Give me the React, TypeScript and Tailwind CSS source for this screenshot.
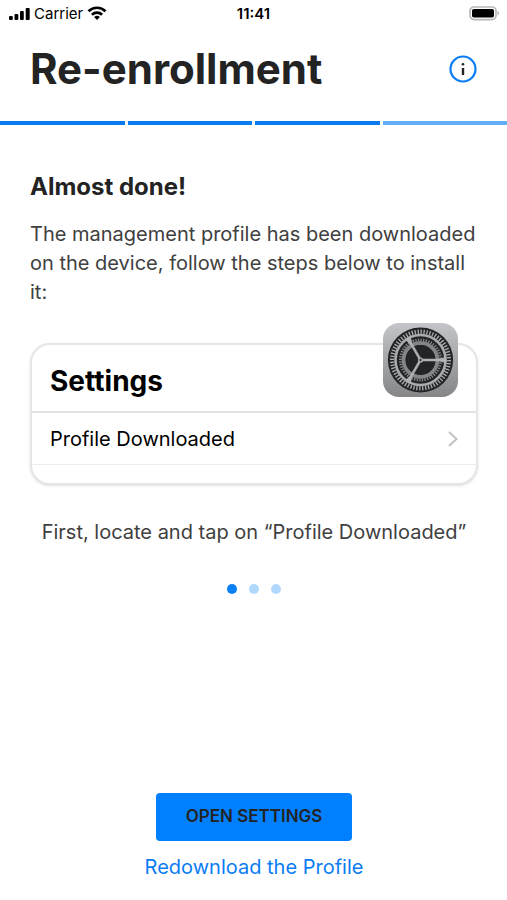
import clsx from 'clsx';

const steps = [
  { id: 'start', done: true },
  { id: 'remove', done: true },
  { id: 'download', done: true },
  { id: 'install', done: false }
];

const slides = ['Locate the profile', 'Install the profile', 'Finish'];

function StatusBar() {
  return (
    <div className="grid h-7 grid-cols-3 items-center px-2 text-[15px] text-black">
      <div className="flex items-center gap-1">
        <svg className="h-3 w-[22px]" viewBox="0 0 22 12" aria-hidden="true">
          <rect x="1" y="8" width="3.800" height="4" rx="1" />
          <rect x="6.500" y="6" width="3.800" height="6" rx="1" />
          <rect x="12" y="3" width="3.800" height="9" rx="1" />
          <rect x="17.700" y="0" width="4" height="12" rx="1" />
        </svg>
        <span>Carrier</span>
        <svg className="h-4 w-5" viewBox="0 0 20 16" fill="none" stroke="#000" strokeWidth="2.700" aria-hidden="true">
          <path d="M1.500 5.200a12.200 12.200 0 0 1 17 0" />
          <path d="M4.900 8.700a7.400 7.400 0 0 1 10.200 0" />
          <path d="M10 14 7.100 11.100a4.100 4.100 0 0 1 5.800 0z" fill="#000" stroke="none" />
        </svg>
      </div>
      <span className="text-center font-semibold">11:41</span>
      <svg className="h-4 w-[30px] justify-self-end" viewBox="0 0 30 16" aria-hidden="true">
        <rect x="1" y="1" width="26" height="12.600" rx="4" fill="#fff" stroke="#b8b8b8" strokeWidth="1.700" />
        <rect x="3" y="3" width="22" height="8.600" rx="1.800" fill="#000" />
        <path d="M28.500 5c1.100.3 1.500 1.200 1.500 2.300s-.4 2-1.500 2.300z" fill="#b8b8b8" />
      </svg>
    </div>
  );
}

function SettingsIcon() {
  return (
    <svg className="h-full w-full" viewBox="0 0 75 75" aria-hidden="true">
      <defs>
        <linearGradient id="tile" x1="0" y1="0" x2="0" y2="1">
          <stop offset="0" stopColor="#c3c5c8" />
          <stop offset="1" stopColor="#858688" />
        </linearGradient>
      </defs>
      <rect width="75" height="74" rx="16" fill="url(#tile)" />
      <circle cx="37.500" cy="37" r="32.600" fill="#222427" />
      <g fill="none" stroke="#a9abad">
        <circle cx="37.500" cy="37" r="28.300" strokeWidth="4.400" pathLength="120" strokeDasharray=".9 1.1" />
        <circle cx="37.500" cy="37" r="25" strokeWidth="2.600" />
      </g>
      <g fill="none" stroke="#838587">
        <circle cx="37.500" cy="37" r="20" strokeWidth="3" pathLength="96" strokeDasharray="1 1" />
        <circle cx="37.500" cy="37" r="16.800" strokeWidth="3.800" />
      </g>
      <circle cx="37.500" cy="37" r="14.900" fill="#222427" />
      {[0, 120, 240].map((angle) => (
        <path
          key={angle}
          transform={`rotate(${angle} 37.500 37)`}
          d="M37.500 36H56l7-1.800v5.600L56 38H37.500z"
          fill="#b0b2b4"
          stroke="#b0b2b4"
          strokeWidth=".5"
        />
      ))}
      <circle cx="37.500" cy="37" r="2.600" fill="#a8aaac" />
      <circle cx="37.500" cy="37" r="1.100" fill="#222427" />
    </svg>
  );
}

function SettingsCard() {
  return (
    <section className="relative rounded-[20px] border-2 border-[#e6e6e6] bg-white text-black shadow-sm">
      <h3 className="px-[18px] pt-4 pb-2.5 text-[28px] leading-10 font-bold">Settings</h3>
      <div className="absolute -top-[22px] right-[18px] h-[75px] w-[75px]">
        <SettingsIcon />
      </div>
      <button
        type="button"
        className="flex h-[54px] w-full items-center justify-between border-t-2 border-b border-t-[#e2e2e2] border-b-[#ececec] px-[18px] text-xl"
      >
        <span>Profile Downloaded</span>
        <svg className="h-4 w-2.5" viewBox="0 0 10 16" fill="none" stroke="#c2c2c4" strokeWidth="2" aria-hidden="true">
          <path d="m1 1 7.500 7L1 15" />
        </svg>
      </button>
      <div className="h-[18px]" />
    </section>
  );
}

export default function App() {
  return (
    <div className="flex min-h-screen flex-col bg-white font-['Inter','Liberation_Sans',sans-serif] text-[#232323]">
      <StatusBar />

      <header className="flex h-[93px] items-start justify-between px-[30px] pt-4">
        <h1 className="text-[42px] leading-[50px] font-[750]">Re-enrollment</h1>
        <button type="button" aria-label="Information" className="mt-[11px] h-7 w-7">
          <svg viewBox="0 0 28 28" fill="none" aria-hidden="true">
            <circle cx="14" cy="14" r="12.500" stroke="#0a7df5" strokeWidth="2.200" />
            <circle cx="14" cy="9.300" r="1.300" fill="#232323" />
            <path d="M14 13v7" stroke="#232323" strokeWidth="2.400" />
          </svg>
        </button>
      </header>

      <div className="flex gap-[3px]">
        {steps.map((step) => (
          <div key={step.id} className={clsx('h-1 flex-1', step.done ? 'bg-[#0a7aee]' : 'bg-[#64adf8]')} />
        ))}
      </div>

      <main className="flex flex-1 flex-col pt-[46px] pr-[29px] pb-[18px] pl-[30px]">
        <h2 className="text-2xl font-bold">Almost done!</h2>
        <p className="mt-[17px] text-xl leading-[29px] text-[#404040]">
          The management profile has been downloaded on the device, follow the steps below to install it:
        </p>

        <div className="mt-9">
          <SettingsCard />
        </div>

        <p className="mt-[33px] text-center text-xl leading-[29px] text-[#404040]">
          First, locate and tap on “Profile Downloaded”
        </p>

        <div className="mt-[37px] flex justify-center gap-3">
          {slides.map((slide, index) => (
            <button
              key={slide}
              type="button"
              aria-label={slide}
              className={clsx('h-2.5 w-2.5 rounded-full', index === 0 ? 'bg-[#0a80f8]' : 'bg-[#b0d8fd]')}
            />
          ))}
        </div>

        <div className="mt-auto flex flex-col items-center gap-3">
          <button type="button" className="h-12 rounded bg-[#0080ff] px-[30px] text-[17px] font-semibold">
            OPEN SETTINGS
          </button>
          <a href="#redownload" className="text-xl leading-[29px] text-[#0a7df5]">
            Redownload the Profile
          </a>
        </div>
      </main>
    </div>
  );
}
